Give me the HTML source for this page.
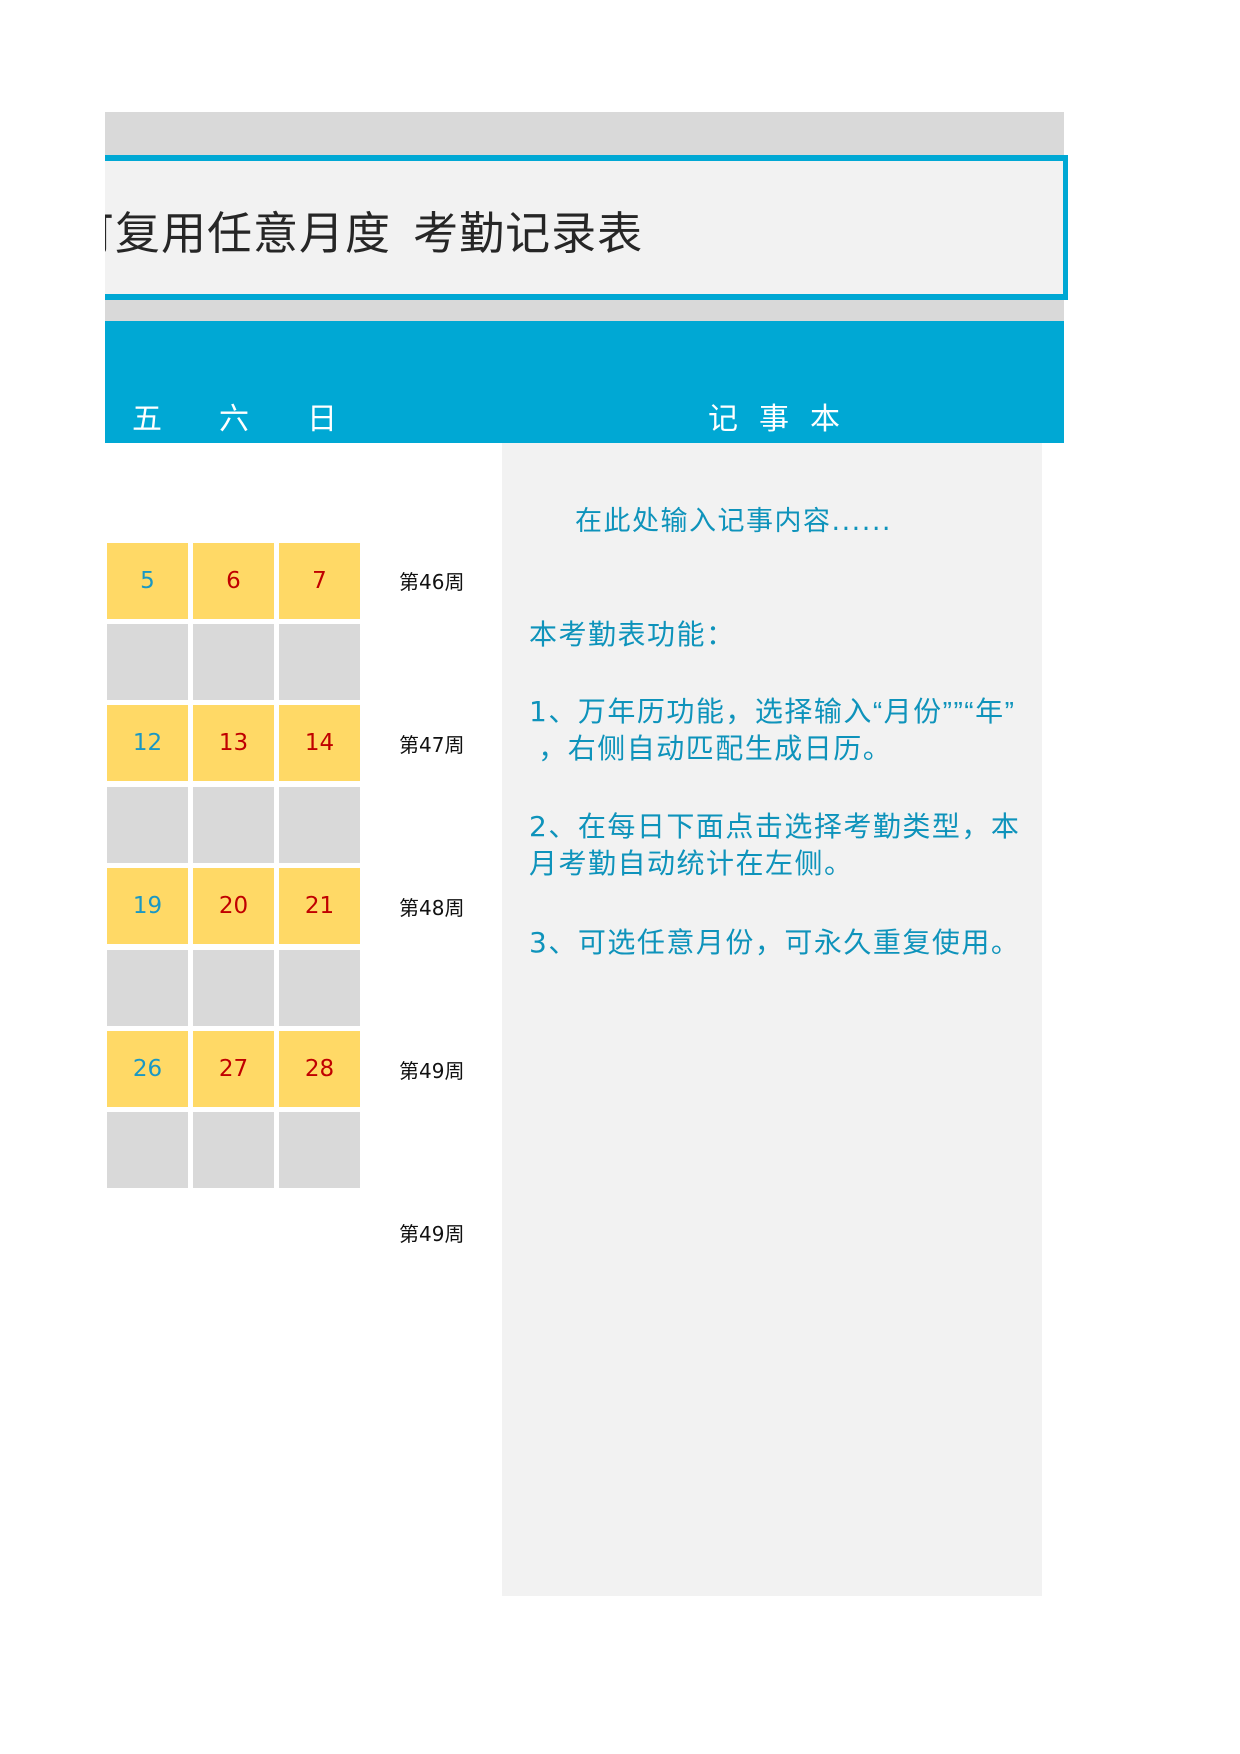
<!DOCTYPE html>
<html><head><meta charset="utf-8"><style>
body{margin:0;width:1240px;height:1754px;background:#fff;position:relative;overflow:hidden;font-family:"DejaVu Sans","Noto Sans CJK SC",sans-serif;}
div{position:absolute;box-sizing:border-box;}
.c{width:81px;height:76px;display:flex;align-items:center;justify-content:center;font-size:23px;font-family:"DejaVu Sans","Noto Sans CJK SC",sans-serif;}
.y{background:#ffd966;}
.g{background:#d9d9d9;}
.b{color:#1a98c4;}
.r{color:#c00000;}
.wk{left:399px;font-size:20px;color:#111;line-height:24px;font-family:"DejaVu Sans","Noto Sans CJK SC",sans-serif;}
.t{color:#0e93bb;font-size:28px;line-height:37px;white-space:pre;left:529px;letter-spacing:1.5px;font-family:"Liberation Sans","Noto Sans CJK SC",sans-serif;}
.d{font-family:"DejaVu Sans",sans-serif;}
</style></head><body>
<div style="left:105px;top:112px;width:959px;height:209px;background:#d9d9d9;"></div>
<div style="left:105px;top:155px;width:963px;height:145px;background:#f2f2f2;border-top:6px solid #00a8d4;border-bottom:6px solid #00a8d4;border-right:5px solid #00a8d4;"></div>
<div style="left:105px;top:200px;width:700px;height:60px;overflow:hidden;"><div style="left:-36px;top:0;font-size:45px;line-height:60px;color:#262626;white-space:pre;letter-spacing:1px;font-family:'Noto Sans CJK SC',sans-serif;">可复用任意月度  考勤记录表</div></div>
<div style="left:105px;top:321px;width:959px;height:122px;background:#00a8d4;"></div>
<div style="left:132px;top:402px;font-size:30px;color:#fff;line-height:36px;">五</div>
<div style="left:219px;top:402px;font-size:30px;color:#fff;line-height:36px;">六</div>
<div style="left:307px;top:402px;font-size:30px;color:#fff;line-height:36px;">日</div>
<div style="left:708px;top:402px;font-size:30px;color:#fff;line-height:36px;letter-spacing:21px;">记事本</div>
<div style="left:502px;top:443px;width:540px;height:1153px;background:#f2f2f2;"></div>
<div class="t" style="left:575px;top:503px;font-size:27px;font-family:'DejaVu Sans','Noto Sans CJK SC',sans-serif;">在此处输入记事内容......</div>
<div class="t" style="top:616px;">本考勤表功能：</div>
<div class="t" style="top:693px;"><span class="d">1</span>、万年历功能，选择输入“月份””“年”
 ，右侧自动匹配生成日历。</div>
<div class="t" style="top:808px;"><span class="d">2</span>、在每日下面点击选择考勤类型，本
月考勤自动统计在左侧。</div>
<div class="t" style="top:924px;"><span class="d">3</span>、可选任意月份，可永久重复使用。</div>

<div class="c y b" style="left:107px;top:543px">5</div><div class="c y r" style="left:193px;top:543px">6</div><div class="c y r" style="left:279px;top:543px">7</div>
<div class="c g" style="left:107px;top:624px"></div><div class="c g" style="left:193px;top:624px"></div><div class="c g" style="left:279px;top:624px"></div>
<div class="c y b" style="left:107px;top:705px">12</div><div class="c y r" style="left:193px;top:705px">13</div><div class="c y r" style="left:279px;top:705px">14</div>
<div class="c g" style="left:107px;top:787px"></div><div class="c g" style="left:193px;top:787px"></div><div class="c g" style="left:279px;top:787px"></div>
<div class="c y b" style="left:107px;top:868px">19</div><div class="c y r" style="left:193px;top:868px">20</div><div class="c y r" style="left:279px;top:868px">21</div>
<div class="c g" style="left:107px;top:950px"></div><div class="c g" style="left:193px;top:950px"></div><div class="c g" style="left:279px;top:950px"></div>
<div class="c y b" style="left:107px;top:1031px">26</div><div class="c y r" style="left:193px;top:1031px">27</div><div class="c y r" style="left:279px;top:1031px">28</div>
<div class="c g" style="left:107px;top:1112px"></div><div class="c g" style="left:193px;top:1112px"></div><div class="c g" style="left:279px;top:1112px"></div>

<div class="wk" style="top:570px">第46周</div>
<div class="wk" style="top:733px">第47周</div>
<div class="wk" style="top:896px">第48周</div>
<div class="wk" style="top:1059px">第49周</div>
<div class="wk" style="top:1222px">第49周</div>
</body></html>
